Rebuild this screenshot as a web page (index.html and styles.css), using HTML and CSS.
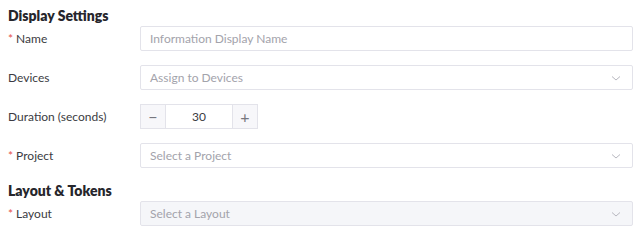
FILE: index.html
```html
<!DOCTYPE html>
<html>
<head>
  <title>Display Settings</title>
  <link rel="stylesheet" href="styles.css">
</head>
<body>
  <form class="settings">
    <h2 class="section-title">Display Settings</h2>
    <div class="row">
      <label class="label required" for="name">Name</label>
      <input class="field" type="text" id="name" placeholder="Information Display Name">
    </div>
    <div class="row">
      <label class="label" for="devices">Devices</label>
      <div class="field select" id="devices">
        <span class="placeholder">Assign to Devices</span>
        <svg class="chevron" width="12" height="12" viewBox="0 0 12 12"><path d="M2 4.5 L6 8 L10 4.5" fill="none" stroke="#b8b8c0" stroke-width="1"/></svg>
      </div>
    </div>
    <div class="row">
      <label class="label" for="duration">Duration (seconds)</label>
      <div class="stepper">
        <button type="button" class="step">&minus;</button>
        <input class="step-value" type="text" id="duration" value="30">
        <button type="button" class="step">+</button>
      </div>
    </div>
    <div class="row">
      <label class="label required" for="project">Project</label>
      <div class="field select" id="project">
        <span class="placeholder">Select a Project</span>
        <svg class="chevron" width="12" height="12" viewBox="0 0 12 12"><path d="M2 4.5 L6 8 L10 4.5" fill="none" stroke="#b8b8c0" stroke-width="1"/></svg>
      </div>
    </div>

    <h2 class="section-title second">Layout &amp; Tokens</h2>
    <div class="row">
      <label class="label required" for="layout">Layout</label>
      <div class="field select disabled" id="layout">
        <span class="placeholder">Select a Layout</span>
        <svg class="chevron" width="12" height="12" viewBox="0 0 12 12"><path d="M2 4.5 L6 8 L10 4.5" fill="none" stroke="#b8b8c0" stroke-width="1"/></svg>
      </div>
    </div>
  </form>
</body>
</html>
```

FILE: styles.css
```css
body {
  font-family: Lato, "Noto Sans", sans-serif;
  margin: 0;
  padding: 8px 7px 0 8px;
  color: #3b3b42;
  background: #fff;
}

.settings {
  display: flex;
  flex-direction: column;
}

.section-title {
  font-size: 14px;
  font-weight: 800;
  color: #26262c;
  margin: 0 0 2px 0;
  line-height: 16px;
}

.section-title.second {
  margin-top: 1px;
  margin-bottom: 2px;
}

.row {
  display: flex;
  align-items: center;
  height: 25px;
  margin-bottom: 14px;
}

.label {
  width: 132px;
  font-size: 12px;
  color: #3b3b42;
}

.required::before {
  content: "*";
  color: #e5534b;
  margin-right: 3px;
}

.field {
  flex: 1;
  height: 25px;
  box-sizing: border-box;
  border: 1px solid #e3e3ea;
  border-radius: 2px;
  padding: 0 9px;
  font-family: inherit;
  font-size: 12px;
  color: #3b3b42;
  background: #fff;
  outline: none;
}

.field::placeholder {
  color: #a3a3ab;
}

.select {
  display: flex;
  align-items: center;
  justify-content: space-between;
}

.placeholder {
  color: #a3a3ab;
}

.chevron {
  margin-right: 1px;
}

.disabled {
  background: #f5f6f9;
}

.stepper {
  display: flex;
  height: 25px;
}

.step {
  width: 26px;
  height: 25px;
  border: 1px solid #e3e3ea;
  background: #f7f7fa;
  color: #76767e;
  font-family: inherit;
  font-size: 16px;
  padding: 0;
  line-height: 1;
}

.step-value {
  width: 66px;
  height: 25px;
  box-sizing: border-box;
  border: 1px solid #e3e3ea;
  border-left: none;
  border-right: none;
  text-align: center;
  font-family: inherit;
  font-size: 12px;
  color: #3b3b42;
  outline: none;
}
```
